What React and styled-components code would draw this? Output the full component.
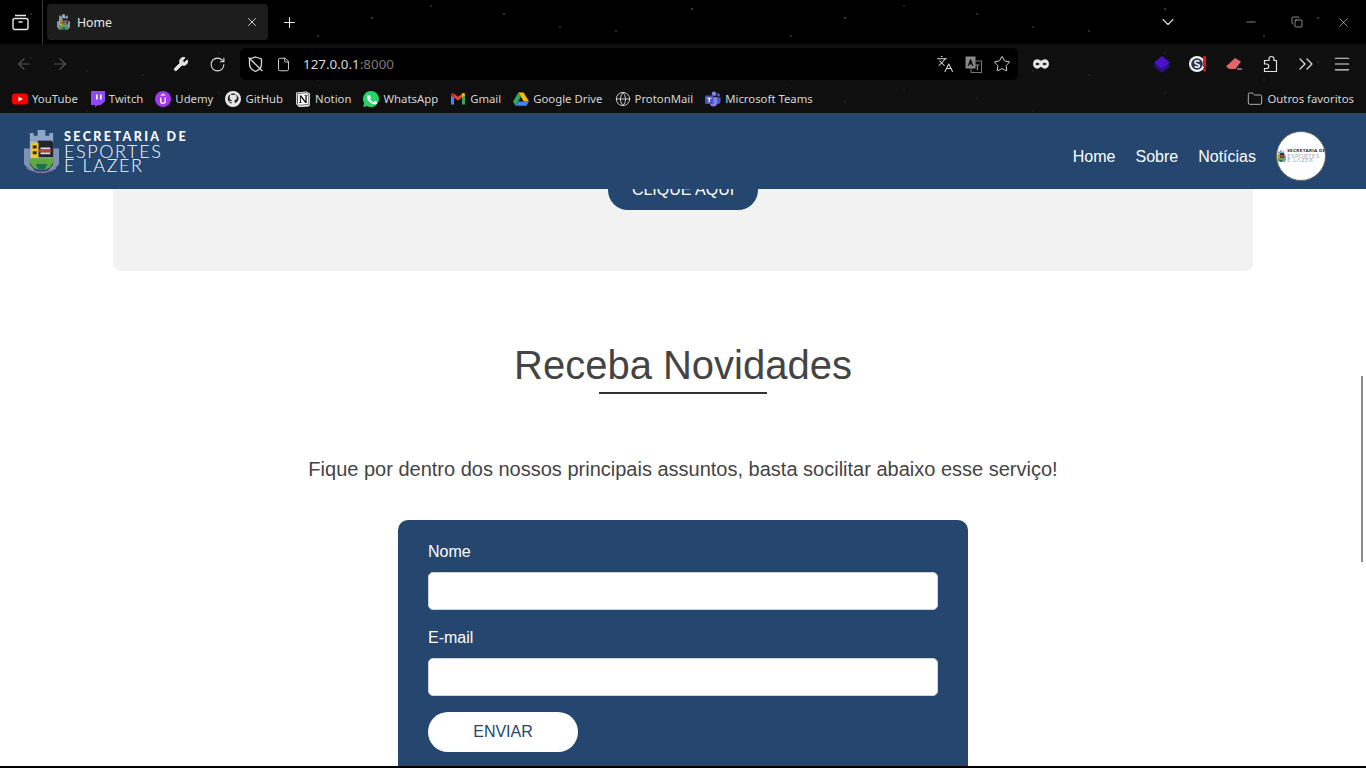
import React from "react";
import styled, { createGlobalStyle, css } from "styled-components";
import {
  ArrowLeft,
  ArrowRight,
  Wrench,
  RotateCw,
  File,
  Languages,
  Star,
  ChevronsRight,
  Menu,
  Folder,
  X,
  Plus,
  ChevronDown,
  Minus,
  Copy,
  Globe
} from "lucide-react";

const BLUE = "#24466f";

const GlobalStyle = createGlobalStyle`
  html, body {
    margin: 0;
    padding: 0;
    height: 100%;
    overflow: hidden;
    background: #fff;
  }
  * {
    box-sizing: border-box;
  }
`;

// faint star wallpaper behind the browser theme
const stars = css`
  background-image:
    radial-gradient(circle at 31px 14px, ${p => p.$star} 0.5px, transparent 1px),
    radial-gradient(circle at 143px 31px, ${p => p.$star} 0.5px, transparent 1px),
    radial-gradient(circle at 219px 9px, ${p => p.$star} 0.6px, transparent 1px),
    radial-gradient(circle at 87px 27px, ${p => p.$star} 0.4px, transparent 1px),
    radial-gradient(circle at 318px 36px, ${p => p.$star} 0.5px, transparent 1px),
    radial-gradient(circle at 372px 18px, ${p => p.$star} 0.6px, transparent 1px),
    radial-gradient(circle at 431px 6px, ${p => p.$star} 0.4px, transparent 1px);
  background-size: 473px 40px;
`;

/* ---------- browser window ---------- */

const Window = styled.div`
  position: relative;
  width: 1366px;
  height: 768px;
  display: flex;
  flex-direction: column;
  overflow: hidden;
  border-bottom: 2px solid #000;
  font-family: "Liberation Sans", Arial, sans-serif;
`;

const BrowserFrame = styled.div`
  background-color: #0f0f10;
  font-family: "Noto Sans", "Open Sans", sans-serif;
  color: #e8e8e8;
`;

const TabStrip = styled.div`
  height: 44px;
  display: flex;
  align-items: flex-start;
  background-color: #000;
  ${stars}
`;

const TabButton = styled.div`
  width: 36px;
  height: 36px;
  flex: none;
  display: flex;
  align-items: center;
  justify-content: center;
  color: #e8e8e8;
`;

const ArchiveCell = styled(TabButton)`
  width: 43px;
  height: 44px;
  padding-right: 2px;
  border-right: 1px solid #3a3a3a;
  margin-right: 4px;
`;

const Tab = styled.div`
  width: 221px;
  height: 36px;
  margin-top: 4px;
  padding: 0 9px 0 10px;
  flex: none;
  display: flex;
  align-items: center;
  gap: 7px;
  background: #1d1d1e;
  border-radius: 4px;
  font-size: 12.3px;
`;

const TabTitle = styled.span`
  flex: 1;
`;

const NewTab = styled(TabButton)`
  margin: 4px 0 0 3px;
`;

const WindowControls = styled.div`
  margin-left: auto;
  display: flex;
  align-items: center;
  height: 44px;
`;

const WindowButton = styled(TabButton)`
  width: 46px;
  height: 44px;
  color: #e0e0e0;
`;

const ListTabs = styled(WindowButton)`
  margin-right: 42px;
  width: 36px;
`;

const Toolbar = styled.div`
  height: 40px;
  padding: 0 6px;
  display: flex;
  align-items: center;
  ${stars}
`;

const ToolIcon = styled.div`
  width: 36px;
  height: 36px;
  flex: none;
  display: flex;
  align-items: center;
  justify-content: center;
  color: ${p => p.$color || "#e0e0e0"};
`;

const Spacer = styled.div`
  flex: 1;
`;

const BackGroup = styled.div`
  display: flex;
  margin-right: 85px;
`;

const AddressBar = styled.div`
  width: 778px;
  height: 32px;
  margin: 0 5px;
  padding: 0 1px 0 1px;
  flex: none;
  display: flex;
  align-items: center;
  background: #000;
  border-radius: 6px;
`;

const AddressIcon = styled.div`
  width: ${p => p.$w || 28}px;
  height: 28px;
  flex: none;
  display: flex;
  align-items: center;
  justify-content: center;
  color: #d8d8d8;
`;

const Url = styled.div`
  flex: 1;
  padding-left: 6px;
  font-size: 13.4px;
  color: #d8d8d8;
`;

const UrlPort = styled.span`
  color: #7c7c7c;
`;

const Bookmarks = styled.div`
  height: 29px;
  padding: 0 12px;
  display: flex;
  align-items: center;
  gap: 12px;
  font-size: 11.35px;
  ${stars}
`;

const Bookmark = styled.div`
  display: flex;
  align-items: center;
  gap: 4px;
  color: #d4d4d4;
  white-space: nowrap;
`;

const OtherBookmarks = styled(Bookmark)`
  margin-left: auto;
`;

const IconSvg = styled.svg`
  flex: none;
  display: block;
`;

/* ---------- icons drawn by hand ---------- */

const ArchiveGlyph = () => (
  <IconSvg width="17" height="17" viewBox="0 0 17 17" fill="none" stroke="#e8e8e8" strokeWidth="1.4">
    <rect x="1" y="4.5" width="15" height="11" rx="2" />
    <path d="M3 1.5h11M6.5 8h4" />
  </IconSvg>
);

const ShieldSlashIcon = () => (
  <IconSvg width="17" height="18" viewBox="0 0 17 18" fill="none" stroke="#d8d8d8" strokeWidth="1.3">
    <path d="M8.5 2 14.5 4v5c0 3.5-2.500 6-6 7.500C5 15 2.500 12.500 2.500 9V4z" />
    <path d="M1.500 2.500 15.500 16" />
  </IconSvg>
);

const YoutubeIcon = () => (
  <IconSvg width="16" height="16" viewBox="0 0 16 16">
    <rect x="0" y="2.5" width="16" height="11" rx="3" fill="#f00" />
    <path d="M6.4 5.5 10.8 8l-4.4 2.5z" fill="#fff" />
  </IconSvg>
);

const TwitchIcon = () => (
  <IconSvg width="15" height="16" viewBox="0 0 15 16">
    <path d="M1 0h14v10l-4 4H8l-3 2v-2H1z" fill="#9146ff" />
    <path d="M6 3.5h1.6v5H6zM10 3.5h1.600v5H10z" fill="#fff" />
  </IconSvg>
);

const UdemyIcon = () => (
  <IconSvg width="16" height="16" viewBox="0 0 16 16">
    <circle cx="8" cy="8" r="8" fill="#a435f0" />
    <path d="M5 6.5v3.600a3 3 0 0 0 6 0V6.500H9.600v3.600a1.600 1.600 0 0 1-3.200 0V6.500z" fill="#fff" />
    <path d="M8 2.600 11 4.400H5z" fill="#fff" />
  </IconSvg>
);

const GithubIcon = () => (
  <IconSvg width="16" height="16" viewBox="0 0 16 16">
    <circle cx="8" cy="8" r="8" fill="#e6e6e6" />
    <path
      d="M8 2.400c-3 0-5.200 2.300-5.200 5.200 0 2.300 1.500 4.200 3.500 4.900.3 0 .4-.1.4-.3v-1c-1.400.3-1.800-.6-1.900-1-.1-.2-.4-.7-.6-.9-.2-.1-.5-.4 0-.4.4 0 .8.4.9.6.5.8 1.300.6 1.600.4.1-.3.2-.6.4-.7-1.300-.2-2.600-.7-2.600-2.900 0-.6.2-1.100.6-1.500-.1-.1-.3-.7.1-1.500 0 0 .5-.1 1.600.6a5.300 5.300 0 0 1 2.800 0c1.100-.7 1.600-.6 1.600-.6.3.8.1 1.400.1 1.500.4.4.6.9.6 1.500 0 2.200-1.300 2.700-2.600 2.900.2.2.4.5.4 1v1.500c0 .2.1.3.4.3 2-.7 3.500-2.600 3.500-4.900C13.200 4.700 11 2.400 8 2.400z"
      fill="#1b1b1b"
    />
  </IconSvg>
);

const NotionIcon = () => (
  <IconSvg width="16" height="16" viewBox="0 0 16 16">
    <path d="M1.200 1.500 11.500.5 15 2.800V14l-1.500 1.500-9.500.4-2.800-3z" fill="#fff" />
    <path d="M2.500 2.500 11.200 1.800 13.800 3.600V13.500l-9.500.8-1.800-2z" fill="#fff" stroke="#222" strokeWidth=".7" />
    <path d="M4.500 4.400h1.900l4 5.700V5.100l-.9-.2v-.6h2.900v.6l-.7.2v7h-1.500L5.900 6.300v4.900l1 .3v.6H4.100v-.6l.8-.3V5.200l-.4-.2z" fill="#111" />
  </IconSvg>
);

const WhatsappIcon = () => (
  <IconSvg width="16" height="16" viewBox="0 0 16 16">
    <path d="M8 0a8 8 0 0 0-6.800 12.200L0 16l3.900-1.100A8 8 0 1 0 8 0z" fill="#25d366" />
    <path
      d="M5.600 3.900c-.2 0-.5.1-.8.4-.3.3-.9.9-.9 2.100s.9 2.400 1 2.600c.1.2 1.800 2.800 4.400 3.800 2.100.8 2.600.6 3 .6.5 0 1.500-.6 1.700-1.200.2-.6.2-1.100.1-1.200l-1.900-1c-.3-.1-.4-.1-.6.1l-.8 1c-.1.2-.3.2-.5.1-.9-.4-2.500-1.500-3.200-3-.1-.2 0-.3.1-.4l.6-.9c.1-.2 0-.3 0-.4l-.8-1.900c-.2-.5-.4-.4-.6-.4z"
      fill="#fff"
    />
  </IconSvg>
);

const GmailIcon = () => (
  <IconSvg width="16" height="16" viewBox="0 0 16 16">
    <path d="M1 13.500V4l3 2.200v7.300z" fill="#4285f4" />
    <path d="M12 13.500V6.200L15 4v9.500z" fill="#34a853" />
    <path d="M1 4.400V3.500C1 2.200 2.500 1.500 3.500 2.300L4 2.700V6.500z" fill="#c5221f" />
    <path d="M4 6.500V2.700l4 3 4-3v3.800L8 9.500z" fill="#ea4335" />
    <path d="M12 6.500V2.700l.5-.4c1-.8 2.500-.1 2.500 1.200v.9z" fill="#fbbc04" />
  </IconSvg>
);

const DriveIcon = () => (
  <IconSvg width="16" height="16" viewBox="0 0 16 16">
    <path d="M5.400 1.500h5.200L16 10.500h-5.200z" fill="#fbbc04" />
    <path d="M5.400 1.500 0 10.500l2.600 4.200L8 5.700z" fill="#34a853" />
    <path d="M2.600 14.700h10.800l2.600-4.200H5.300z" fill="#4285f4" />
  </IconSvg>
);

const TeamsIcon = () => (
  <IconSvg width="16" height="16" viewBox="0 0 16 16">
    <circle cx="9" cy="2.800" r="2.300" fill="#7b83eb" />
    <circle cx="13.300" cy="4" r="1.700" fill="#5059c9" />
    <path d="M11 6.500h4.500v4.300a2.400 2.400 0 0 1-4.500 1z" fill="#5059c9" />
    <path d="M5 6h7v6a3.500 3.500 0 0 1-7 0z" fill="#7b83eb" />
    <rect x="0" y="4.500" width="8.500" height="8.500" rx="1" fill="#4b53bc" />
    <path d="M2 6.700h4.500v1.100H4.900v3.500H3.600V7.800H2z" fill="#fff" />
  </IconSvg>
);

const TranslateAltIcon = () => (
  <IconSvg width="17" height="17" viewBox="0 0 17 17">
    <rect x="0.500" y="0.500" width="10" height="12" fill="#8a8a8a" />
    <rect x="6" y="5" width="10.500" height="11.500" fill="none" stroke="#777" />
    <path d="M2.500 10 5.200 3h.8l2.600 7H7.300L6.800 8.500H4.300L3.800 10z" fill="#111" />
    <path d="M10 8.500h4.500v1H13V14h-1.200V9.500H10z" fill="#8a8a8a" />
  </IconSvg>
);

const MaskIcon = () => (
  <IconSvg width="16" height="10" viewBox="0 0 17 10">
    <path
      d="M4.500 0C6 0 7 .8 8.500 1.500 10 .8 11 0 12.500 0 15 0 17 2.200 17 5s-2 5-4.500 5C11 10 10 9 8.500 8 7 9 6 10 4.500 10 2 10 0 7.800 0 5s2-5 4.500-5z"
      fill="#e4e4e4"
    />
    <ellipse cx="4.700" cy="5" rx="2" ry="1.300" fill="#222" />
    <ellipse cx="12.300" cy="5" rx="2" ry="1.300" fill="#222" />
  </IconSvg>
);

const LayersIcon = () => (
  <IconSvg width="18" height="17" viewBox="0 0 18 17">
    <path d="M9 4 18 10 9 17 0 10z" fill="#2b1180" />
    <path d="M9 0l8 6.500L9 13 1 6.500z" fill="#4b10c8" />
  </IconSvg>
);

const SpellIcon = () => (
  <IconSvg width="18" height="18" viewBox="0 0 18 18">
    <circle cx="8" cy="9" r="8" fill="#f2f2f2" />
    <circle cx="8" cy="9" r="5.800" fill="#2c3350" />
    <rect x="14" y="1" width="3" height="11" rx="1" fill="#e3141c" />
    <rect x="14" y="13.500" width="3" height="3" rx="1" fill="#e3141c" />
    <path d="M10.500 6.400C8.800 5.300 5.800 5.600 5.800 7.500c0 2.100 4.800 1.200 4.800 3.200 0 1.700-3.200 1.900-5 .7" fill="none" stroke="#fff" strokeWidth="1.500" />
  </IconSvg>
);

const EraserIcon = () => (
  <IconSvg width="16" height="12" viewBox="0 0 16 12">
    <path d="M9 0 15 3.500 9.500 11H3.500L0 8.500z" fill="#e0666c" />
    <path d="M11 10.500h5v1h-5z" fill="#d0d0d0" />
  </IconSvg>
);

const PuzzleIcon = () => (
  <IconSvg width="18" height="18" viewBox="0 0 18 18" fill="none" stroke="#e0e0e0" strokeWidth="1.2">
    <path d="M3.500 5.500H8V4a2.500 2.500 0 0 1 5 0v1.500h2.500V16.500H3.500V13.500H5.500a2 2 0 0 0 0-4.500H3.500z" />
  </IconSvg>
);

/* same crest in the header logo, the avatar and the favicon */
const Crest = ({ size = 36 }) => (
  <IconSvg width={size} height={(size * 46) / 36} viewBox="0 0 36 46">
    <path d="M6 12V4h4v3h4V1h8v6h4V4h4v8z" fill="#8ea6c6" />
    <path d="M0 20h6v17l5 5H5l-5-6zM36 20h-6v17l-5 5h6l5-6z" fill="#7e93b3" />
    <path d="M6 12h24v18a12 12 0 0 1-24 0z" fill="#9cb3d3" />
    <path d="M14 12h13a3 3 0 0 1 3 3v14H14z" fill="#23232b" />
    <path d="M7 14h8v16H7z" fill="#f0c22c" />
    <path d="M9 17h4v3H9zM9 23h4v3H9z" fill="#2a2a2a" />
    <path d="M17 19h10v2H17zM17 24h10v2H17z" fill="#d9dde6" />
    <path d="M15 21h13v3H15z" fill="#b3413d" />
    <path d="M6 30h24v3a12 9 0 0 1-24 0z" fill="#5fa83a" />
    <path d="M12 36h12l-3 6h-6z" fill="#1f6e54" />
    <path d="M3 38q15 12 30 0v3q-15 9-30 0z" fill="#8e7aa6" />
  </IconSvg>
);

/* ---------- site ---------- */

const SiteHeader = styled.header`
  position: relative;
  z-index: 2;
  height: 76px;
  padding: 0 40px 0 24px;
  flex: none;
  display: flex;
  align-items: center;
  justify-content: space-between;
  background: ${BLUE};
`;

const Brand = styled.div`
  display: flex;
  align-items: center;
  gap: 5px;
  color: #fff;
  font-family: Lato, sans-serif;
`;

const BrandText = styled.div`
  display: flex;
  flex-direction: column;
  white-space: nowrap;
`;

const BrandTop = styled.span`
  margin-bottom: 1px;
  font-size: 12.5px;
  line-height: 12px;
  font-weight: 900;
  letter-spacing: 2.4px;
`;

const BrandBottom = styled.span`
  font-size: 18px;
  line-height: 14px;
  font-weight: 300;
  letter-spacing: 1.6px;
`;

const HeaderRight = styled.div`
  margin-top: 10px;
  display: flex;
  align-items: center;
  gap: 20px;
`;

const NavLink = styled.a`
  padding-top: 1px;
  color: #fff;
  font-size: 16px;
`;

const Avatar = styled.div`
  width: 50px;
  height: 50px;
  border-radius: 50%;
  border: 1px solid #666;
  background: #fff;
  overflow: hidden;
  display: flex;
  align-items: center;
  justify-content: center;
  color: #222;
  font-family: Lato, sans-serif;
`;

const MiniBrand = styled.div`
  display: flex;
  align-items: center;
  gap: 1px;
  white-space: nowrap;
`;

const MiniText = styled.div`
  display: flex;
  flex-direction: column;
`;

const MiniTop = styled.span`
  font-size: 4.5px;
  line-height: 4.5px;
  font-weight: 900;
  letter-spacing: .4px;
`;

const MiniBottom = styled.span`
  font-size: 6px;
  line-height: 4.5px;
  font-weight: 300;
  letter-spacing: .5px;
  color: #555;
`;

const Content = styled.main`
  flex: 1;
  min-height: 0;
  display: flex;
  flex-direction: column;
  align-items: center;
  background: #fff;
  overflow: hidden;
`;

const Card = styled.section`
  width: 1140px;
  margin-top: -30px;
  padding: 11px 0 61px;
  flex: none;
  display: flex;
  justify-content: center;
  background: #f2f2f2;
  border-radius: 8px;
`;

const CardButton = styled.a`
  width: 150px;
  height: 40px;
  padding-bottom: 1px;
  display: flex;
  align-items: center;
  justify-content: center;
  background: ${BLUE};
  color: #fff;
  border-radius: 20px;
  font-size: 16px;
`;

const Title = styled.h2`
  margin: 71px 0 0;
  font-size: 40px;
  line-height: 46px;
  font-weight: 400;
  color: #444;

  &::after {
    content: "";
    display: block;
    width: 168px;
    height: 2px;
    margin: 4px auto 0;
    background: #333;
  }
`;

const Lead = styled.p`
  margin: 63px 0 0;
  font-size: 20px;
  line-height: 24px;
  color: #444;
`;

const FormBox = styled.form`
  width: 570px;
  margin-top: 39px;
  padding: 23px 30px 40px;
  flex: none;
  display: flex;
  flex-direction: column;
  background: ${BLUE};
  border-radius: 10px;
`;

const Label = styled.label`
  display: block;
  margin-bottom: 11px;
  color: #fff;
  font-size: 16px;
  line-height: 18px;
`;

const Input = styled.input`
  display: block;
  width: 100%;
  height: 38px;
  margin-bottom: 19px;
  background: #fff;
  border: 1px solid #ced4da;
  border-radius: 5px;
`;

const SubmitButton = styled.button`
  width: 150px;
  height: 40px;
  flex: none;
  margin-top: -3px;
  border: 0;
  border-radius: 20px;
  background: #fff;
  color: ${BLUE};
  font-family: "Liberation Sans", Arial, sans-serif;
  font-size: 16px;
`;

const ScrollThumb = styled.div`
  position: absolute;
  top: 376px;
  right: 3px;
  width: 2px;
  height: 186px;
  background: #8a8a8a;
  z-index: 3;
`;

const bookmarks = [
  { name: "YouTube", icon: <YoutubeIcon /> },
  { name: "Twitch", icon: <TwitchIcon /> },
  { name: "Udemy", icon: <UdemyIcon /> },
  { name: "GitHub", icon: <GithubIcon /> },
  { name: "Notion", icon: <NotionIcon /> },
  { name: "WhatsApp", icon: <WhatsappIcon /> },
  { name: "Gmail", icon: <GmailIcon /> },
  { name: "Google Drive", icon: <DriveIcon /> },
  { name: "ProtonMail", icon: <Globe size={16} strokeWidth={1.4} color="#d8d8d8" /> },
  { name: "Microsoft Teams", icon: <TeamsIcon /> }
];

const App = () => {
  return (
    <Window>
      <GlobalStyle />
      <BrowserFrame>
        <TabStrip $star="#4a4a4a">
          <ArchiveCell>
            <ArchiveGlyph />
          </ArchiveCell>
          <Tab>
            <Crest size={13} />
            <TabTitle>Home</TabTitle>
            <X size={14} strokeWidth={1.5} />
          </Tab>
          <NewTab>
            <Plus size={17} strokeWidth={1.5} />
          </NewTab>
          <WindowControls>
            <ListTabs>
              <ChevronDown size={20} strokeWidth={1.3} />
            </ListTabs>
            <WindowButton>
              <Minus size={14} strokeWidth={1} />
            </WindowButton>
            <WindowButton>
              <Copy size={12} strokeWidth={1.2} />
            </WindowButton>
            <WindowButton>
              <X size={15} strokeWidth={1} />
            </WindowButton>
          </WindowControls>
        </TabStrip>

        <Toolbar $star="#2a2a2a">
          <BackGroup>
            <ToolIcon $color="#555">
              <ArrowLeft size={18} strokeWidth={1.5} />
            </ToolIcon>
            <ToolIcon $color="#555">
              <ArrowRight size={18} strokeWidth={1.5} />
            </ToolIcon>
          </BackGroup>
          <ToolIcon>
            <Wrench size={16} fill="#e0e0e0" strokeWidth={1.5} />
          </ToolIcon>
          <ToolIcon>
            <RotateCw size={17} strokeWidth={1.5} />
          </ToolIcon>
          <AddressBar>
            <AddressIcon>
              <ShieldSlashIcon />
            </AddressIcon>
            <AddressIcon>
              <File size={15} strokeWidth={1.5} />
            </AddressIcon>
            <Url>
              127.0.0.1<UrlPort>:8000</UrlPort>
            </Url>
            <AddressIcon>
              <Languages size={18} strokeWidth={1.4} />
            </AddressIcon>
            <AddressIcon>
              <TranslateAltIcon />
            </AddressIcon>
            <AddressIcon $w={30}>
              <Star size={18} strokeWidth={1.3} />
            </AddressIcon>
          </AddressBar>
          <ToolIcon>
            <MaskIcon />
          </ToolIcon>
          <Spacer />
          <ToolIcon>
            <LayersIcon />
          </ToolIcon>
          <ToolIcon>
            <SpellIcon />
          </ToolIcon>
          <ToolIcon>
            <EraserIcon />
          </ToolIcon>
          <ToolIcon>
            <PuzzleIcon />
          </ToolIcon>
          <ToolIcon>
            <ChevronsRight size={24} strokeWidth={1.2} />
          </ToolIcon>
          <ToolIcon>
            <Menu size={20} strokeWidth={1.3} />
          </ToolIcon>
        </Toolbar>

        <Bookmarks $star="#262626">
          {bookmarks.map(b => (
            <Bookmark key={b.name}>
              {b.icon}
              {b.name}
            </Bookmark>
          ))}
          <OtherBookmarks>
            <Folder size={16} strokeWidth={1.2} />
            Outros favoritos
          </OtherBookmarks>
        </Bookmarks>
      </BrowserFrame>

      <SiteHeader>
        <Brand>
          <Crest size={35} />
          <BrandText>
            <BrandTop>SECRETARIA DE</BrandTop>
            <BrandBottom>ESPORTES</BrandBottom>
            <BrandBottom>E LAZER</BrandBottom>
          </BrandText>
        </Brand>
        <HeaderRight>
          <NavLink>Home</NavLink>
          <NavLink>Sobre</NavLink>
          <NavLink>Notícias</NavLink>
          <Avatar>
            <MiniBrand>
              <Crest size={10} />
              <MiniText>
                <MiniTop>SECRETARIA DE</MiniTop>
                <MiniBottom>ESPORTES</MiniBottom>
                <MiniBottom>E LAZER</MiniBottom>
              </MiniText>
            </MiniBrand>
          </Avatar>
        </HeaderRight>
      </SiteHeader>

      <Content>
        <Card>
          <CardButton>CLIQUE AQUI</CardButton>
        </Card>
        <Title>Receba Novidades</Title>
        <Lead>Fique por dentro dos nossos principais assuntos, basta socilitar abaixo esse serviço!</Lead>
        <FormBox onSubmit={e => e.preventDefault()}>
          <Label htmlFor="nome">Nome</Label>
          <Input id="nome" type="text" />
          <Label htmlFor="email">E-mail</Label>
          <Input id="email" type="email" />
          <SubmitButton type="submit">ENVIAR</SubmitButton>
        </FormBox>
      </Content>
      <ScrollThumb />
    </Window>
  );
};

export default App;
